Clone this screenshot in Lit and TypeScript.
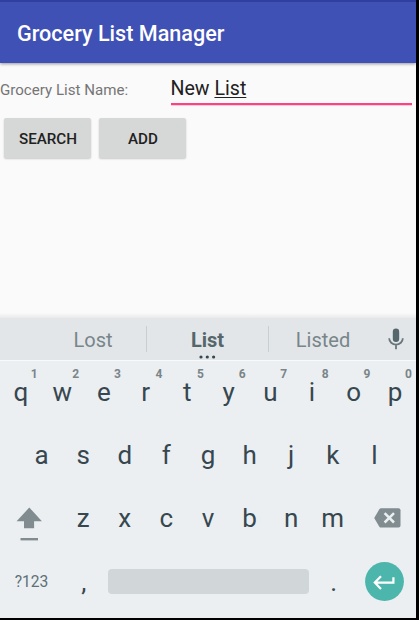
import { LitElement, html, css, svg } from "lit";
import { customElement, property } from "lit/decorators.js";

const ROW_1 = [..."qwertyuiop"];
const ROW_2 = [..."asdfghjkl"];
const ROW_3 = [..."zxcvbnm"];

@customElement("letter-key")
class LetterKey extends LitElement {
  @property() letter = "";
  @property() hint = "";

  static styles = css`
    :host {
      position: relative;
      width: 41.6px;
      height: 100%;
      flex: none;
      display: flex;
      align-items: center;
      justify-content: center;
      font-size: 26px;
      color: #37474f;
    }
    .hint {
      position: absolute;
      right: 4px;
      top: 6px;
      font-size: 12px;
      line-height: 14px;
      font-weight: 700;
      color: #7a8588;
    }
  `;

  render() {
    return html`${this.letter}${this.hint ? html`<span class="hint">${this.hint}</span>` : ""}`;
  }
}

@customElement("soft-keyboard")
class SoftKeyboard extends LitElement {
  static styles = css`
    :host {
      display: flex;
      flex-direction: column;
      height: 300px;
      background: #ebeff2;
    }
    .suggestions {
      height: 43px;
      flex: none;
      display: flex;
      align-items: center;
      background: #e2e6e9;
      border-bottom: 1px solid #f7f9fa;
      box-sizing: border-box;
      font-size: 20px;
      color: #788589;
      padding-left: 40px;
    }
    .word {
      height: 100%;
      box-sizing: border-box;
      padding-top: 2px;
      display: flex;
      align-items: center;
      justify-content: center;
    }
    .left { width: 106px; }
    .middle {
      position: relative;
      width: 121px;
      font-weight: 700;
      font-size: 20px;
      color: #56666b;
    }
    .right { width: 108px; }
    .divider {
      width: 1px;
      height: 26px;
      background: #c9ced1;
    }
    .more {
      position: absolute;
      left: 52px;
      bottom: 1.3px;
      width: 17px;
      height: 4px;
    }
    .mic {
      width: 16px;
      height: 22px;
      margin: -1px 0 0 11px;
    }
    .row {
      height: 63.3px;
      flex: none;
      display: flex;
      align-items: center;
    }
    .first { height: 62.3px; }
    .second { padding-left: 20.8px; }
    .side {
      width: 62.4px;
      height: 100%;
      flex: none;
      display: flex;
      align-items: center;
    }
    .shift { width: 26px; height: 34px; margin: 12px 0 0 16px; }
    .delete { width: 27px; height: 20px; margin: -1px 0 0 20px; }
    .symbols {
      width: 63px;
      text-align: center;
      font-size: 15.6px;
      color: #5f6f76;
    }
    .space {
      width: 201px;
      height: 25px;
      margin: 0 4px 0 3.4px;
      border-radius: 4px;
      background: #d1d6d9;
    }
    .enter {
      width: 39px;
      height: 39px;
      margin-left: 10.5px;
    }
  `;

  render() {
    return html`
      <div class="suggestions">
        <div class="word left">Lost</div>
        <div class="divider"></div>
        <div class="word middle">List
          <svg class="more" viewBox="0 0 17 4" fill="#37474f">
            ${[2, 8.3, 14.6].map((x) => svg`<circle cx=${x} cy="2" r="1.6" />`)}
          </svg>
        </div>
        <div class="divider"></div>
        <div class="word right">Listed</div>
        <svg class="mic" viewBox="0 0 16 22">
          <rect x="4.8" y="0.5" width="6.4" height="13.5" rx="3.2" fill="#56666d" />
          <path d="M1.2 10.2a6.8 6.4 0 0 0 13.6 0M8 16.5v4.8" fill="none" stroke="#69777d" stroke-width="1.8" />
        </svg>
      </div>
      <div class="row first">
        ${ROW_1.map((c, i) => html`<letter-key .letter=${c} .hint=${String((i + 1) % 10)}></letter-key>`)}
      </div>
      <div class="row second">
        ${ROW_2.map((c) => html`<letter-key .letter=${c}></letter-key>`)}
      </div>
      <div class="row">
        <div class="side">
          <svg class="shift" viewBox="0 0 26 34" fill="#808c90">
            <path d="M13.3 0.5L25.9 14.2H18.1V21.2H8V14.2H0.6Z" />
            <rect x="4.5" y="31" width="17.5" height="2.4" />
          </svg>
        </div>
        ${ROW_3.map((c) => html`<letter-key .letter=${c}></letter-key>`)}
        <div class="side">
          <svg class="delete" viewBox="0 0 27 20">
            <path d="M7.2 0.2H24.5Q26.5 0.2 26.5 2.2V17.6Q26.5 19.6 24.5 19.6H7.2Q6 19.6 5.2 18.4L0.2 9.9L5.2 1.4Q6 0.2 7.2 0.2Z" fill="#808c90" />
            <path d="M10.6 5.1L20 14.5M20 5.1L10.6 14.5" stroke="#ebeff2" stroke-width="2.5" />
          </svg>
        </div>
      </div>
      <div class="row">
        <div class="symbols">?123</div>
        <letter-key .letter=${","}></letter-key>
        <div class="space"></div>
        <letter-key .letter=${"."}></letter-key>
        <svg class="enter" viewBox="0 0 39 39">
          <circle cx="19.5" cy="19.5" r="19.4" fill="#4db6ac" />
          <path d="M28.4 15.2V20.6H10M16 14.2L9.8 20.6L16 27" fill="none" stroke="#fff" stroke-width="2.2" />
        </svg>
      </div>
    `;
  }
}

@customElement("app-root")
class AppRoot extends LitElement {
  static styles = css`
    :host {
      display: block;
      box-sizing: border-box;
      width: 419px;
      height: 620px;
      padding: 0 3px 2px 0;
      background: #000;
      font-family: Roboto, "Liberation Sans", sans-serif;
      overflow: hidden;
    }
    .screen {
      height: 618px;
      display: flex;
      flex-direction: column;
      background: #fafafa;
    }
    .bar {
      height: 63px;
      flex: none;
      box-sizing: border-box;
      border-top: 2px solid #303f9f;
      padding: 2px 0 0 17px;
      display: flex;
      align-items: center;
      background: #3f51b5;
      color: #fff;
      font-size: 21.6px;
      font-weight: 500;
      box-shadow: 0 1px 3px rgba(0, 0, 0, 0.4);
    }
    .form {
      flex: 1;
    }
    .field {
      display: flex;
      height: 52px;
    }
    .label {
      width: 170.5px;
      padding-top: 17px;
      line-height: 20px;
      font-size: 15.1px;
      color: #757575;
    }
    .input {
      width: 241.5px;
      height: 41.5px;
      box-sizing: border-box;
      border-bottom: 2px solid #ff4081;
      box-shadow: 0 -1px 0 -0.3px rgba(255, 64, 129, 0), 0 0.5px 0 rgba(255, 64, 129, 0.5);
      padding-top: 14px;
      line-height: 24px;
      font-size: 19.6px;
      color: #212121;
    }
    .composing {
      text-decoration: underline;
      text-decoration-thickness: 1px;
      text-underline-offset: 2px;
      text-decoration-skip-ink: none;
    }
    .buttons {
      display: flex;
      gap: 8px;
      padding: 3px 0 0 4px;
    }
    .button {
      width: 87px;
      height: 40px;
      border-radius: 2px;
      background: #d6d7d7;
      box-shadow: 0 1px 2px rgba(0, 0, 0, 0.2);
      display: flex;
      align-items: center;
      justify-content: center;
      padding: 1px 0 0 1px;
      box-sizing: border-box;
      font-size: 15.2px;
      font-weight: 500;
      color: #212121;
    }
    .shade {
      height: 5px;
      flex: none;
      background: linear-gradient(#fafafa, #e9e9e9);
    }
  `;

  render() {
    return html`
      <div class="screen">
        <div class="bar">Grocery List Manager</div>
        <div class="form">
          <div class="field">
            <div class="label">Grocery List Name:</div>
            <div class="input">New <span class="composing">List</span></div>
          </div>
          <div class="buttons">
            <div class="button">SEARCH</div>
            <div class="button">ADD</div>
          </div>
        </div>
        <div class="shade"></div>
        <soft-keyboard></soft-keyboard>
      </div>
    `;
  }
}
